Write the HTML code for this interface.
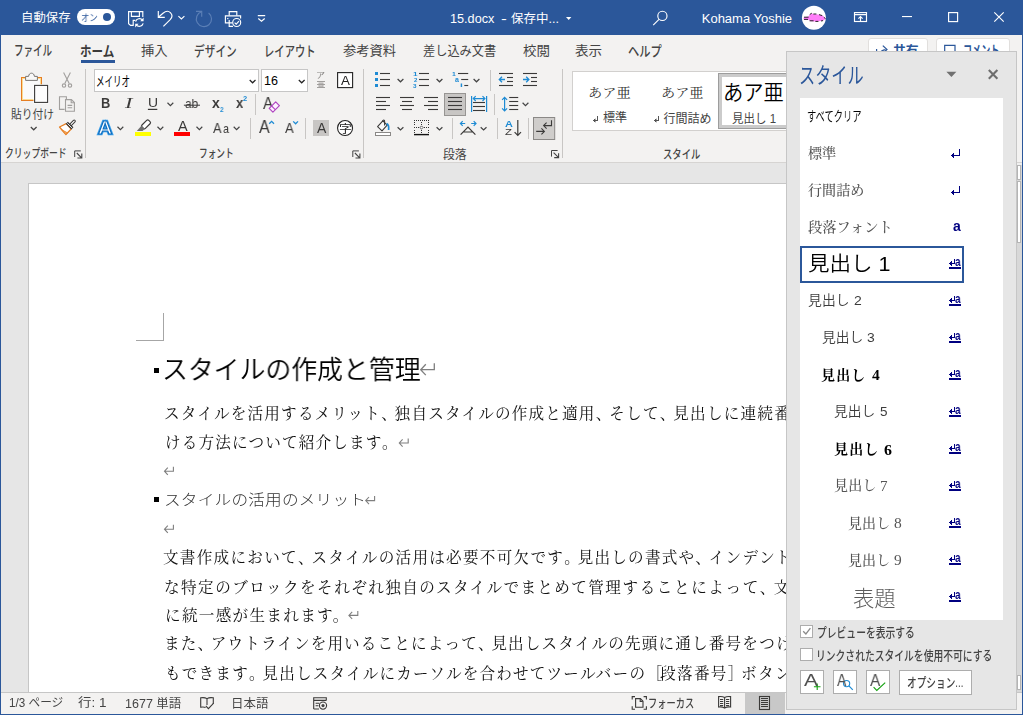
<!DOCTYPE html>
<html lang="ja">
<head>
<meta charset="utf-8">
<title>15.docx - Word</title>
<style>
html,body{margin:0;padding:0}
body{width:1023px;height:715px;position:relative;overflow:hidden;background:#e6e6e6;font-family:'Liberation Sans','Noto Sans CJK JP',sans-serif;}
#app{position:absolute;left:0;top:0;width:1023px;height:715px;overflow:hidden}
#app div,#app svg,#app span,#app p,#app h1,#app h2{position:absolute;margin:0;padding:0;box-sizing:border-box}
#app svg{overflow:visible}
#app .t{white-space:nowrap;line-height:1;transform-origin:0 0;font-weight:400}
#app .sec{position:absolute;left:0;top:0;width:0;height:0;margin:0;padding:0;display:block}
</style>
</head>
<body>
<div id="app">
<main id="document" class="sec" aria-label="文書">
<div style="left:0px;top:163px;width:1023px;height:529px;background:#e6e6e6;"></div>
<div style="left:28px;top:183px;width:800px;height:520px;background:#ffffff;border:1px solid #c6c6c6;"></div>
<div style="left:136px;top:340px;width:28px;height:1px;background:#a6a6a6;"></div>
<div style="left:163px;top:313px;width:1px;height:28px;background:#a6a6a6;"></div>
<div style="left:154px;top:368px;width:5px;height:5px;background:#000;"></div>
<h1 class="t" style="font-family:'Liberation Sans','Noto Sans CJK JP',sans-serif;font-size:26.2px;font-weight:350;will-change:transform;transform:scaleX(0.9876);color:#000;left:161.71px;top:357px;">スタイルの作成と管理</h1>
<p class="t" style="font-family:'Liberation Serif','Noto Serif CJK SC',serif;font-size:15.6px;will-change:transform;color:#111;left:164.30px;top:406px;"><span style="position:static;letter-spacing:1.18px">スタイルを活用するメリット</span><span style="position:static;letter-spacing:-2.12px">、</span><span style="position:static;letter-spacing:1.18px">独自スタイルの作成と</span><span style="position:static;letter-spacing:1.23px">適用</span><span style="position:static;letter-spacing:-2.07px">、</span><span style="position:static;letter-spacing:1.23px">そして</span><span style="position:static;letter-spacing:-2.07px">、</span><span style="position:static;letter-spacing:1.23px">見出しに連続番</span></p>
<p class="t" style="font-family:'Liberation Serif','Noto Serif CJK SC',serif;font-size:15.6px;will-change:transform;color:#111;left:164.60px;top:435px;"><span style="position:static;letter-spacing:1.16px">ける方法について紹介しま</span><span style="position:static;letter-spacing:0.77px">す</span><span style="position:static;letter-spacing:-2.53px">。</span></p>
<div style="left:154px;top:497px;width:5px;height:5px;background:#000;"></div>
<h2 class="t" style="font-family:'Liberation Sans','Noto Sans CJK JP',sans-serif;font-size:14.6px;font-weight:300;will-change:transform;transform:scaleX(1.14);color:#333;left:163.75px;top:493px;"><span style="position:static;letter-spacing:0.19px">スタイルの活用の</span><span style="position:static;letter-spacing:0.12px">メリット</span></h2>
<p class="t" style="font-family:'Liberation Serif','Noto Serif CJK SC',serif;font-size:15.6px;will-change:transform;color:#111;left:163.36px;top:550px;"><span style="position:static;letter-spacing:1.27px">文書作成において</span><span style="position:static;letter-spacing:-2.03px">、</span><span style="position:static;letter-spacing:1.27px">スタイルの</span><span style="position:static;letter-spacing:1.27px">活用は必要不可欠です</span><span style="position:static;letter-spacing:-2.03px">。</span><span style="position:static;letter-spacing:1.20px">見出しの書式や</span><span style="position:static;letter-spacing:-2.10px">、</span><span style="position:static;letter-spacing:1.20px">インデ</span><span style="position:static;letter-spacing:0.55px">ント</span></p>
<p class="t" style="font-family:'Liberation Serif','Noto Serif CJK SC',serif;font-size:15.6px;will-change:transform;color:#111;left:164.27px;top:580px;"><span style="position:static;letter-spacing:1.45px">な特定のブロックをそれぞれ</span><span style="position:static;letter-spacing:1.34px">独自のスタイルでまとめて</span><span style="position:static;letter-spacing:1.57px">管理することによって</span><span style="position:static;letter-spacing:-1.73px">、</span><span style="position:static;letter-spacing:1.57px">文</span></p>
<p class="t" style="font-family:'Liberation Serif','Noto Serif CJK SC',serif;font-size:15.6px;will-change:transform;color:#111;left:164.57px;top:608px;"><span style="position:static;letter-spacing:1.30px">に統一感が生まれま</span><span style="position:static;letter-spacing:0.17px">す</span><span style="position:static;letter-spacing:-3.13px">。</span></p>
<p class="t" style="font-family:'Liberation Serif','Noto Serif CJK SC',serif;font-size:15.6px;will-change:transform;color:#111;left:163.82px;top:636px;"><span style="position:static;letter-spacing:1.12px">また</span><span style="position:static;letter-spacing:-2.18px">、</span><span style="position:static;letter-spacing:1.12px">アウトラインを用いる</span><span style="position:static;letter-spacing:1.14px">ことによって</span><span style="position:static;letter-spacing:-2.16px">、</span><span style="position:static;letter-spacing:1.14px">見出しスタイルの</span><span style="position:static;letter-spacing:1.18px">先頭に通し番号を</span><span style="position:static;letter-spacing:1.52px">つけ</span></p>
<p class="t" style="font-family:'Liberation Serif','Noto Serif CJK SC',serif;font-size:15.6px;will-change:transform;color:#111;left:164.80px;top:666px;"><span style="position:static;letter-spacing:1.19px">もできます</span><span style="position:static;letter-spacing:-2.11px">。</span><span style="position:static;letter-spacing:1.19px">見出しスタイル</span><span style="position:static;letter-spacing:1.15px">にカーソルを合わせてツー</span><span style="position:static;letter-spacing:1.32px">ルバーの</span><span style="position:static;letter-spacing:-1.98px">［</span><span style="position:static;letter-spacing:1.32px">段落番</span><span style="position:static;letter-spacing:1.16px">号</span><span style="position:static;letter-spacing:-2.14px">］</span><span style="position:static;letter-spacing:1.37px">ボタン</span></p>
<svg style="left:0px;top:0px;" width="1023" height="715" viewBox="0 0 1023 715"><path d="M434.30 363.30V369.70H420.80M425.80 364.30L420.70 369.70L425.80 375.10" stroke="#7f7f7f" stroke-width="1.3" fill="none"/><path d="M408.20 438.50V443.00H399.40M402.60 439.40L399.30 443.00L402.60 446.60" stroke="#7f7f7f" stroke-width="1.1" fill="none"/><path d="M173.40 466.70V471.20H164.60M167.80 467.60L164.50 471.20L167.80 474.80" stroke="#7f7f7f" stroke-width="1.1" fill="none"/><path d="M374.60 496.10V500.60H365.80M369.00 497.00L365.70 500.60L369.00 504.20" stroke="#7f7f7f" stroke-width="1.1" fill="none"/><path d="M173.40 524.70V529.20H164.60M167.80 525.60L164.50 529.20L167.80 532.80" stroke="#7f7f7f" stroke-width="1.1" fill="none"/><path d="M357.80 610.90V615.40H349.00M352.20 611.80L348.90 615.40L352.20 619.00" stroke="#7f7f7f" stroke-width="1.1" fill="none"/></svg>
</main>
<nav id="ribbon" class="sec" aria-label="リボン">
<div style="left:0px;top:35px;width:1023px;height:127px;background:#f3f2f1;"></div>
<span class="t" style="font-family:'Liberation Sans','Noto Sans CJK JP',sans-serif;font-size:14px;font-weight:500;transform:scaleX(0.6814);color:#444;left:14.17px;top:43px;">ファイル</span>
<span class="t" style="font-family:'Liberation Sans','Noto Sans CJK JP',sans-serif;font-size:14px;font-weight:700;transform:scaleX(0.8255);color:#3b3a39;left:80.42px;top:44px;">ホーム</span>
<div style="left:81px;top:60px;width:34px;height:3px;background:#2b579a;"></div>
<span class="t" style="font-family:'Liberation Sans','Noto Sans CJK JP',sans-serif;font-size:13px;transform:scaleX(1.0270);color:#444;left:140.62px;top:44px;">挿入</span>
<span class="t" style="font-family:'Liberation Sans','Noto Sans CJK JP',sans-serif;font-size:14px;font-weight:500;transform:scaleX(0.7636);color:#444;left:194.21px;top:44px;">デザイン</span>
<span class="t" style="font-family:'Liberation Sans','Noto Sans CJK JP',sans-serif;font-size:14px;font-weight:500;transform:scaleX(0.7368);color:#444;left:264.02px;top:44px;">レイアウト</span>
<span class="t" style="font-family:'Liberation Sans','Noto Sans CJK JP',sans-serif;font-size:13px;transform:scaleX(1.0223);color:#444;left:343.47px;top:44px;">参考資料</span>
<span class="t" style="font-family:'Liberation Sans','Noto Sans CJK JP',sans-serif;font-size:13px;transform:scaleX(0.9382);color:#444;left:422.74px;top:44px;">差し込み文書</span>
<span class="t" style="font-family:'Liberation Sans','Noto Sans CJK JP',sans-serif;font-size:13px;transform:scaleX(1.0381);color:#444;left:522.76px;top:44px;">校閲</span>
<span class="t" style="font-family:'Liberation Sans','Noto Sans CJK JP',sans-serif;font-size:13px;transform:scaleX(1.0416);color:#444;left:575.41px;top:44px;">表示</span>
<span class="t" style="font-family:'Liberation Sans','Noto Sans CJK JP',sans-serif;font-size:14px;font-weight:500;transform:scaleX(0.8033);color:#444;left:628.42px;top:44px;">ヘルプ</span>
<div style="left:868px;top:38px;width:60px;height:27px;background:#fff;border:1px solid #e1dfdd;border-radius:3px;"></div>
<div style="left:936px;top:38px;width:74px;height:27px;background:#fff;border:1px solid #e1dfdd;border-radius:3px;"></div>
<span class="t" style="font-family:'Liberation Sans','Noto Sans CJK JP',sans-serif;font-size:13px;font-weight:700;transform:scaleX(0.9860);color:#2b579a;left:892.65px;top:44px;">共有</span>
<span class="t" style="font-family:'Liberation Sans','Noto Sans CJK JP',sans-serif;font-size:13.5px;font-weight:700;transform:scaleX(0.6720);color:#2b579a;left:963.18px;top:44px;">コメント</span>
<svg style="left:0px;top:0px;" width="1023" height="70" viewBox="0 0 1023 70"><path d="M876.6 49V57M879.4 54.4C880.4 51.4 882.6 49.8 885.6 49.6M882.8 45.6L887 49.6L882.8 53.6" stroke="#2b579a" fill="none" stroke-width="1.2"/><path d="M944.7 45.4H955V55H944.7Z" stroke="#2b579a" fill="none" stroke-width="1.2"/></svg>
<div style="left:0px;top:162px;width:1023px;height:1px;background:#d6d4d2;"></div>
<div style="left:85px;top:69px;width:1px;height:89px;background:#c8c6c4;"></div>
<div style="left:363px;top:69px;width:1px;height:89px;background:#c8c6c4;"></div>
<div style="left:562px;top:69px;width:1px;height:89px;background:#c8c6c4;"></div>
<span class="t" style="font-family:'Liberation Sans','Noto Sans CJK JP',sans-serif;font-size:12px;transform:scaleX(0.8969);color:#444;left:10.61px;top:109px;">貼り付け</span>
<span class="t" style="font-family:'Liberation Sans','Noto Sans CJK JP',sans-serif;font-size:12px;font-weight:500;transform:scaleX(0.7336);color:#444;left:5.10px;top:148px;">クリップボード</span>
<span class="t" style="font-family:'Liberation Sans','Noto Sans CJK JP',sans-serif;font-size:12px;font-weight:500;transform:scaleX(0.7230);color:#444;left:198.96px;top:148px;">フォント</span>
<span class="t" style="font-family:'Liberation Sans','Noto Sans CJK JP',sans-serif;font-size:12px;transform:scaleX(0.9870);color:#444;left:443.14px;top:149px;">段落</span>
<span class="t" style="font-family:'Liberation Sans','Noto Sans CJK JP',sans-serif;font-size:12px;font-weight:500;transform:scaleX(0.7763);color:#444;left:663.14px;top:149px;">スタイル</span>
<div style="left:94px;top:69px;width:165px;height:23px;background:#fff;border:1px solid #c6c6c6;"></div>
<span class="t" style="font-family:'Liberation Sans','Noto Sans CJK JP',sans-serif;font-size:13.5px;transform:scaleX(0.6318);color:#000;left:96.27px;top:75px;">メイリオ</span>
<div style="left:261px;top:69px;width:47px;height:23px;background:#fff;border:1px solid #c6c6c6;"></div>
<span class="t" style="font-family:'Liberation Sans','Noto Sans CJK JP',sans-serif;font-size:12px;transform:scaleX(1.0470);color:#000;left:264.10px;top:75px;">16</span>
<div style="left:572px;top:71px;width:250px;height:60px;background:#fff;border:1px solid #d2d0ce;"></div>
<span class="t" style="font-family:'Liberation Serif','Noto Serif CJK SC',serif;font-size:12.6px;transform:scaleX(1.1299);color:#333;left:588.45px;top:87px;">あア亜</span>
<span class="t" style="font-family:'Liberation Sans','Noto Sans CJK JP',sans-serif;font-size:12.5px;transform:scaleX(0.9652);color:#444;left:602.89px;top:112px;">標準</span>
<span class="t" style="font-family:'Liberation Serif','Noto Serif CJK SC',serif;font-size:12.6px;transform:scaleX(1.1243);color:#333;left:661.05px;top:87px;">あア亜</span>
<span class="t" style="font-family:'Liberation Sans','Noto Sans CJK JP',sans-serif;font-size:12px;color:#444;left:663.55px;top:113px;">行間詰め</span>
<div style="left:718px;top:73px;width:100px;height:56px;background:#fff;border:4px solid #cbcbcb;"></div>
<div style="left:718px;top:73px;width:100px;height:56px;border:1px solid #9d9d9d;"></div>
<span class="t" style="font-family:'Liberation Sans','Noto Sans CJK JP',sans-serif;font-size:21.33px;font-weight:350;transform:scaleX(0.9494);color:#000;left:723.01px;top:83px;">あア亜</span>
<span class="t" style="font-family:'Liberation Sans','Noto Sans CJK JP',sans-serif;font-size:12px;transform:scaleX(0.9572);color:#444;left:731.88px;top:113px;">見出し 1</span>
<svg style="left:0px;top:0px;" width="1023" height="165" viewBox="0 0 1023 165"><rect x="21.5" y="77.5" width="20" height="23" fill="#fafafa" stroke="#e67e22" stroke-width="1"/><rect x="22.5" y="78.5" width="18" height="21" fill="none" stroke="#fbdc94" stroke-width="1"/><path d="M25.6 80.4V76.4H28.6C28.8 74.2 30 73.2 31.5 73.2C33 73.2 34.2 74.2 34.4 76.4H37.4V80.4Z" fill="#f8f8f8" stroke="#797775" stroke-width="1"/><rect x="33.5" y="84.3" width="15.2" height="19.2" fill="#fff"/><rect x="34.6" y="85.4" width="13" height="17" fill="#fdfdfd" stroke="#3b3a39" stroke-width="1.1"/><path d="M30.8 127L33.7 129.8L36.6 127" stroke="#444" fill="none" stroke-width="1.2"/><path stroke="#a19f9d" fill="none" stroke-width="1.1" d="M63.6 72.6L69.2 83.6M70.4 72.6L64.8 83.6"/><circle cx="64" cy="85.6" r="1.7" stroke="#a19f9d" fill="none" stroke-width="1.1"/><circle cx="70" cy="85.6" r="1.7" stroke="#a19f9d" fill="none" stroke-width="1.1"/><path stroke="#a19f9d" fill="none" stroke-width="1.1" d="M64.6 109.4H59.5V96.8H66.4V99"/><path stroke="#a19f9d" fill="none" stroke-width="1.1" d="M65.5 99.6H71.4L74.4 102.6V111.2H65.5Z" fill="#f3f2f1"/><path stroke="#a19f9d" fill="none" stroke-width="1.1" d="M71.2 99.8V102.8H74.2M67.6 105.4H72.2M67.6 107.8H72.2"/><path d="M66.2 123.6L59.5 127L65.9 134.5L71.2 129Z" fill="#fff" stroke="#e67e22" stroke-width="1.2" stroke-linejoin="round"/><path d="M61.4 129.6L67.4 132.8L65.9 134.4Z" fill="#f6b26b" stroke="#e67e22" stroke-width="0.8" stroke-linejoin="round"/><path d="M70.8 124.6L74.2 121.2" stroke="#3b3a39" stroke-width="3.2" stroke-linecap="round" fill="none"/><path d="M70.8 124.6L74.2 121.2" stroke="#fff" stroke-width="1.2" stroke-linecap="round" fill="none"/><path d="M66.8 122.8L72.4 128.4" stroke="#3b3a39" stroke-width="3" fill="none"/><path d="M67.3 123.3L71.9 127.9" stroke="#fff" stroke-width="0.9" fill="none"/><path d="M74.7 157.0V150.9H80.8" stroke="#444" fill="none" stroke-width="1"/><path d="M76.8 153.0L81.60000000000001 157.8M81.8 153.6V158.0H77.4" stroke="#444" fill="none" stroke-width="1.1"/></svg>
<svg style="left:0px;top:0px;" width="1023" height="165" viewBox="0 0 1023 165"><path d="M249.7 80.0L252.6 82.8L255.5 80.0" stroke="#222" fill="none" stroke-width="1.2"/><path d="M298.8 80.0L301.7 82.8L304.6 80.0" stroke="#222" fill="none" stroke-width="1.2"/><rect x="317" y="81.0" width="8" height="1" fill="#a19f9d"/><rect x="317" y="84.0" width="8" height="1" fill="#a19f9d"/><rect x="317" y="87.0" width="8" height="1" fill="#a19f9d"/><rect x="319" y="83" width="4" height="4" fill="none" stroke="#a19f9d" stroke-width="0.8"/><rect x="337.6" y="72.6" width="15" height="15" fill="#fff" stroke="#222" stroke-width="1.1"/><path d="M167.5 102.8L170.4 105.6L173.3 102.8" stroke="#444" fill="none" stroke-width="1.2"/><rect x="147.9" y="108.8" width="9.4" height="1.2" fill="#3b3a39"/><rect x="183.9" y="104.7" width="16.1" height="1" fill="#3b3a39"/><rect x="255" y="94" width="1" height="21" fill="#c8c6c4"/><path d="M117.5 126.8L120.4 129.6L123.3 126.8" stroke="#444" fill="none" stroke-width="1.2"/><path d="M157.5 126.8L160.4 129.6L163.3 126.8" stroke="#444" fill="none" stroke-width="1.2"/><path d="M196.5 126.8L199.4 129.6L202.3 126.8" stroke="#444" fill="none" stroke-width="1.2"/><path d="M233.7 126.8L236.6 129.6L239.5 126.8" stroke="#444" fill="none" stroke-width="1.2"/><g transform="rotate(-45 145.8 124.6)"><rect x="141.3" y="122.2" width="9.6" height="4.8" rx="1.5" fill="#fff" stroke="#3b3a39" stroke-width="1.15"/></g><path d="M141.6 125.6L144.8 128.8L142.6 131.1H136.8Z" fill="#6e6e6e"/><rect x="135" y="132" width="16" height="4" fill="#ffff00"/><rect x="174" y="132" width="16" height="4" fill="#ff0000"/><rect x="250" y="118" width="1" height="21" fill="#c8c6c4"/><rect x="305" y="118" width="1" height="21" fill="#c8c6c4"/><path d="M269.2 123.8L271.6 121.4L274 123.8" stroke="#1e8bd4" fill="none" stroke-width="1.3"/><path d="M293.2 121.4L295.6 123.8L298 121.4" stroke="#1e8bd4" fill="none" stroke-width="1.3"/><rect x="313" y="120" width="16" height="16" fill="#c8c6c4"/><circle cx="345.05" cy="128.05" r="7.5" fill="#fff" stroke="#222" stroke-width="1.1"/><path d="M352.8 157.0V150.9H358.90000000000003" stroke="#444" fill="none" stroke-width="1"/><path d="M354.90000000000003 153.0L359.7 157.8M359.90000000000003 153.6V158.0H355.5" stroke="#444" fill="none" stroke-width="1.1"/></svg>
<span class="t" style="font-family:'Liberation Sans','Noto Sans CJK JP',sans-serif;font-size:8px;will-change:transform;transform:scaleX(1.1335);color:#8a8886;left:316.16px;top:72px;">ア</span>
<span class="t" style="font-family:'Liberation Sans','Noto Sans CJK JP',sans-serif;font-size:4px;will-change:transform;transform:scaleX(1.0721);color:#a19f9d;left:319.01px;top:84px;">亜</span>
<span class="t" style="font-family:'Liberation Sans',sans-serif;font-size:13px;will-change:transform;transform:scaleX(1.0296);color:#222;left:340.75px;top:74px;">A</span>
<span class="t" style="font-family:'Liberation Sans',sans-serif;font-size:14.5px;font-weight:700;will-change:transform;transform:scaleX(0.8829);color:#3b3a39;left:100.60px;top:96px;">B</span>
<span class="t" style="font-family:'Liberation Serif',serif;font-size:14px;font-style:italic;will-change:transform;transform:scaleX(1.5990);color:#3b3a39;left:125.26px;top:97px;">I</span>
<span class="t" style="font-family:'Liberation Sans',sans-serif;font-size:12.5px;will-change:transform;transform:scaleX(1.1143);color:#3b3a39;left:147.70px;top:97px;">U</span>
<span class="t" style="font-family:'Liberation Sans',sans-serif;font-size:13px;will-change:transform;transform:scaleX(0.9073);color:#3b3a39;left:185.35px;top:97px;">ab</span>
<span class="t" style="font-family:'Liberation Sans',sans-serif;font-size:14px;font-weight:700;will-change:transform;transform:scaleX(0.9755);color:#3b3a39;left:212.36px;top:96px;">x</span>
<span class="t" style="font-family:'Liberation Sans',sans-serif;font-size:7.5px;font-weight:700;will-change:transform;transform:scaleX(0.8587);color:#1e8bd4;left:219.70px;top:106px;">2</span>
<span class="t" style="font-family:'Liberation Sans',sans-serif;font-size:14px;font-weight:700;will-change:transform;transform:scaleX(0.9331);color:#3b3a39;left:236.36px;top:96px;">x</span>
<span class="t" style="font-family:'Liberation Sans',sans-serif;font-size:7.5px;font-weight:700;will-change:transform;color:#1e8bd4;left:243.49px;top:95px;">2</span>
<span class="t" style="font-family:'Liberation Sans',sans-serif;font-size:17px;will-change:transform;transform:scaleX(0.8842);color:#3b3a39;left:263.16px;top:95px;">A</span>
<span class="t" style="font-family:'Liberation Sans',sans-serif;font-size:18px;font-weight:700;will-change:transform;transform:scaleX(1.0989);color:#fff;left:97.97px;top:119px;-webkit-text-stroke:2.6px #41a5ee;">A</span>
<span class="t" style="font-family:'Liberation Sans',sans-serif;font-size:18px;font-weight:700;will-change:transform;transform:scaleX(1.0989);color:#fff;left:97.97px;top:119px;-webkit-text-stroke:1.1px #0f6cbd;">A</span>
<span class="t" style="font-family:'Liberation Sans',sans-serif;font-size:14.5px;will-change:transform;transform:scaleX(0.9627);color:#3b3a39;left:177.65px;top:119px;">A</span>
<span class="t" style="font-family:'Liberation Sans',sans-serif;font-size:14px;will-change:transform;transform:scaleX(0.9141);color:#3b3a39;left:213.26px;top:121px;">A</span>
<span class="t" style="font-family:'Liberation Sans',sans-serif;font-size:13px;font-weight:500;will-change:transform;transform:scaleX(0.8188);color:#3b3a39;left:223.27px;top:122px;">a</span>
<span class="t" style="font-family:'Liberation Sans',sans-serif;font-size:17.5px;will-change:transform;transform:scaleX(0.9223);color:#3b3a39;left:259.27px;top:119px;">A</span>
<span class="t" style="font-family:'Liberation Sans',sans-serif;font-size:14px;will-change:transform;transform:scaleX(0.9366);color:#3b3a39;left:284.86px;top:121px;">A</span>
<span class="t" style="font-family:'Liberation Sans',sans-serif;font-size:14px;will-change:transform;transform:scaleX(0.9705);color:#3b3a39;left:316.66px;top:121px;">A</span>
<span class="t" style="font-family:'Liberation Sans','Noto Sans CJK JP',sans-serif;font-size:11.5px;will-change:transform;transform:scaleX(1.1109);color:#222;left:338.60px;top:124px;">字</span>
<svg style="left:0px;top:0px;" width="1023" height="165" viewBox="0 0 1023 165"><path d="M279.4 105.6L275.7 101.9L269.2 108.4L272.9 112.1Z" fill="#fdf3ff" stroke="#b146c2" stroke-width="1.2" stroke-linejoin="round"/><path d="M275.3 109.7L271.6 106.0" stroke="#b146c2" stroke-width="1.1" fill="none"/></svg>
<svg style="left:0px;top:0px;" width="1023" height="165" viewBox="0 0 1023 165"><rect x="375" y="72.0" width="3" height="3" fill="#1e8bd4"/><rect x="380" y="72.95" width="10.00" height="1.1" fill="#3b3a39"/><rect x="375" y="78.0" width="3" height="3" fill="#1e8bd4"/><rect x="380" y="78.95" width="10.00" height="1.1" fill="#3b3a39"/><rect x="375" y="84.0" width="3" height="3" fill="#1e8bd4"/><rect x="380" y="84.95" width="10.00" height="1.1" fill="#3b3a39"/><path d="M397.6 79.0L400.5 81.8L403.40000000000003 79.0" stroke="#444" fill="none" stroke-width="1.2"/><rect x="419" y="72.95" width="10.00" height="1.1" fill="#3b3a39"/><rect x="419" y="78.95" width="10.00" height="1.1" fill="#3b3a39"/><rect x="419" y="84.95" width="10.00" height="1.1" fill="#3b3a39"/><path d="M436.6 79.0L439.5 81.8L442.40000000000003 79.0" stroke="#444" fill="none" stroke-width="1.2"/><rect x="458" y="72.95" width="10.20" height="1.1" fill="#3b3a39"/><rect x="461.2" y="78.95" width="7.00" height="1.1" fill="#3b3a39"/><rect x="464.3" y="84.95" width="3.90" height="1.1" fill="#3b3a39"/><path d="M473.6 79.0L476.5 81.8L479.40000000000003 79.0" stroke="#444" fill="none" stroke-width="1.2"/><rect x="490" y="70" width="1" height="21" fill="#c8c6c4"/><rect x="499" y="72.95" width="14.00" height="1.1" fill="#3b3a39"/><rect x="499" y="84.95" width="14.00" height="1.1" fill="#3b3a39"/><rect x="507" y="76.95" width="6.00" height="1.1" fill="#3b3a39"/><rect x="507" y="80.95" width="6.00" height="1.1" fill="#3b3a39"/><path d="M505.00 79.50L499.30 79.50M502.00 76.80L499.30 79.50L502.00 82.20" stroke="#1e8bd4" fill="none" stroke-width="1.3"/><rect x="523" y="72.95" width="14.00" height="1.1" fill="#3b3a39"/><rect x="523" y="84.95" width="14.00" height="1.1" fill="#3b3a39"/><rect x="531" y="76.95" width="6.00" height="1.1" fill="#3b3a39"/><rect x="531" y="80.95" width="6.00" height="1.1" fill="#3b3a39"/><path d="M523.00 79.50L528.90 79.50M526.20 82.20L528.90 79.50L526.20 76.80" stroke="#1e8bd4" fill="none" stroke-width="1.3"/><rect x="376" y="96.95" width="14.00" height="1.1" fill="#3b3a39"/><rect x="400" y="96.95" width="14.00" height="1.1" fill="#3b3a39"/><rect x="424" y="96.95" width="14.00" height="1.1" fill="#3b3a39"/><rect x="376" y="100.95" width="10.00" height="1.1" fill="#3b3a39"/><rect x="402" y="100.95" width="10.00" height="1.1" fill="#3b3a39"/><rect x="428" y="100.95" width="10.00" height="1.1" fill="#3b3a39"/><rect x="376" y="104.95" width="14.00" height="1.1" fill="#3b3a39"/><rect x="400" y="104.95" width="14.00" height="1.1" fill="#3b3a39"/><rect x="424" y="104.95" width="14.00" height="1.1" fill="#3b3a39"/><rect x="376" y="108.95" width="10.00" height="1.1" fill="#3b3a39"/><rect x="402" y="108.95" width="10.00" height="1.1" fill="#3b3a39"/><rect x="428" y="108.95" width="10.00" height="1.1" fill="#3b3a39"/><rect x="444.5" y="93.5" width="21" height="22" fill="#c8c6c4" stroke="#979593" stroke-width="1"/><rect x="448" y="96.95" width="14.00" height="1.1" fill="#3b3a39"/><rect x="448" y="100.95" width="14.00" height="1.1" fill="#3b3a39"/><rect x="448" y="104.95" width="14.00" height="1.1" fill="#3b3a39"/><rect x="448" y="108.95" width="14.00" height="1.1" fill="#3b3a39"/><rect x="471" y="96" width="1.2" height="16" fill="#1e8bd4"/><rect x="486" y="96" width="1.2" height="16" fill="#1e8bd4"/><path d="M479.00 98.60L473.30 98.60M475.70 96.20L473.30 98.60L475.70 101.00" stroke="#1e8bd4" fill="none" stroke-width="1.2"/><path d="M479.00 98.60L484.90 98.60M482.50 101.00L484.90 98.60L482.50 96.20" stroke="#1e8bd4" fill="none" stroke-width="1.2"/><rect x="473" y="101.95" width="12.00" height="1.1" fill="#3b3a39"/><rect x="473" y="105.95" width="12.00" height="1.1" fill="#3b3a39"/><rect x="473" y="109.95" width="12.00" height="1.1" fill="#3b3a39"/><rect x="494" y="94" width="1" height="21" fill="#c8c6c4"/><path d="M504.60 104.00L504.60 97.30M507.10 99.80L504.60 97.30L502.10 99.80" stroke="#1e8bd4" fill="none" stroke-width="1.2"/><path d="M504.60 104.00L504.60 110.90M502.10 108.40L504.60 110.90L507.10 108.40" stroke="#1e8bd4" fill="none" stroke-width="1.2"/><rect x="509.2" y="96.95" width="9.00" height="1.1" fill="#3b3a39"/><rect x="509.2" y="100.95" width="9.00" height="1.1" fill="#3b3a39"/><rect x="509.2" y="104.95" width="9.00" height="1.1" fill="#3b3a39"/><rect x="509.2" y="108.95" width="9.00" height="1.1" fill="#3b3a39"/><path d="M522.6 102.8L525.5 105.6L528.4 102.8" stroke="#444" fill="none" stroke-width="1.2"/><path d="M382.8 120.8L377.6 126.6L382 130.8L387.2 125.2Z" fill="#fafafa" stroke="#3b3a39" stroke-width="1.1" stroke-linejoin="round"/><path d="M382.6 121.2C383 119.8 384.6 119.6 384.6 121.2V125.6" fill="none" stroke="#3b3a39" stroke-width="1.1"/><path d="M386.6 123.6C388.4 124.4 389 126.8 388.6 130" fill="none" stroke="#1e8bd4" stroke-width="1.7"/><rect x="375.5" y="132.5" width="15" height="3" fill="#fff" stroke="#8a8886" stroke-width="1"/><path d="M397.6 127.2L400.5 130.0L403.40000000000003 127.2" stroke="#444" fill="none" stroke-width="1.2"/><rect x="414" y="120" width="1" height="1" fill="#333"/><rect x="414" y="122" width="1" height="1" fill="#333"/><rect x="414" y="124" width="1" height="1" fill="#333"/><rect x="414" y="127" width="1" height="1" fill="#333"/><rect x="414" y="130" width="1" height="1" fill="#333"/><rect x="414" y="132" width="1" height="1" fill="#333"/><rect x="416" y="120" width="1" height="1" fill="#333"/><rect x="416" y="127" width="1" height="1" fill="#333"/><rect x="418" y="120" width="1" height="1" fill="#333"/><rect x="418" y="127" width="1" height="1" fill="#333"/><rect x="420" y="120" width="1" height="1" fill="#333"/><rect x="421" y="122" width="1" height="1" fill="#333"/><rect x="421" y="124" width="1" height="1" fill="#333"/><rect x="421" y="130" width="1" height="1" fill="#333"/><rect x="421" y="132" width="1" height="1" fill="#333"/><rect x="422" y="120" width="1" height="1" fill="#333"/><rect x="424" y="120" width="1" height="1" fill="#333"/><rect x="424" y="127" width="1" height="1" fill="#333"/><rect x="426" y="120" width="1" height="1" fill="#333"/><rect x="426" y="127" width="1" height="1" fill="#333"/><rect x="428" y="120" width="1" height="1" fill="#333"/><rect x="428" y="122" width="1" height="1" fill="#333"/><rect x="428" y="124" width="1" height="1" fill="#333"/><rect x="428" y="127" width="1" height="1" fill="#333"/><rect x="428" y="130" width="1" height="1" fill="#333"/><rect x="428" y="132" width="1" height="1" fill="#333"/><path d="M421.5 125.9L423.1 127.5L421.5 129.1L419.9 127.5Z" fill="#fff" stroke="#333" stroke-width="0.8"/><rect x="414" y="133.90" width="15.00" height="1.4" fill="#111"/><path d="M436.6 127.2L439.5 130.0L442.40000000000003 127.2" stroke="#444" fill="none" stroke-width="1.2"/><rect x="452" y="118" width="1" height="21" fill="#c8c6c4"/><path d="M465.20 123.50L460.40 123.50M462.70 121.20L460.40 123.50L462.70 125.80" stroke="#1e8bd4" fill="none" stroke-width="1.2"/><path d="M471.20 123.50L476.00 123.50M473.70 125.80L476.00 123.50L473.70 121.20" stroke="#1e8bd4" fill="none" stroke-width="1.2"/><path d="M460.6 134.6L468 127L475.4 134.6M463.2 132H472.8" fill="none" stroke="#3b3a39" stroke-width="1.2"/><path d="M480.7 127.2L483.59999999999997 130.0L486.5 127.2" stroke="#444" fill="none" stroke-width="1.2"/><rect x="497" y="118" width="1" height="21" fill="#c8c6c4"/><path d="M517.80 120.00L517.80 135.40M514.60 132.20L517.80 135.40L521.00 132.20" stroke="#3b3a39" fill="none" stroke-width="1.2"/><rect x="528" y="118" width="1" height="21" fill="#c8c6c4"/><rect x="533.5" y="117.5" width="21.2" height="22" fill="#cfcdcb" stroke="#8a8886" stroke-width="1"/><path d="M551.5 120.2V125.6H543.8M546.6 122.6L543.6 125.6L546.6 128.6" fill="none" stroke="#3b3a39" stroke-width="1.1"/><path d="M536.2 131.4H544.2M541.4 128.4L544.4 131.4L541.4 134.4" fill="none" stroke="#3b3a39" stroke-width="1.1"/><path d="M551.5 156.6V150.5H557.6" stroke="#444" fill="none" stroke-width="1"/><path d="M553.6 152.6L558.4 157.4M558.6 153.2V157.6H554.2" stroke="#444" fill="none" stroke-width="1.1"/></svg>
<span class="t" style="font-family:'Liberation Sans',sans-serif;font-size:5px;font-weight:700;will-change:transform;transform:scaleX(1.6499);color:#1e8bd4;left:413.08px;top:72px;">1</span>
<span class="t" style="font-family:'Liberation Sans',sans-serif;font-size:5px;font-weight:700;will-change:transform;transform:scaleX(1.2071);color:#1e8bd4;left:413.64px;top:78px;">2</span>
<span class="t" style="font-family:'Liberation Sans',sans-serif;font-size:5px;font-weight:700;will-change:transform;transform:scaleX(1.2665);color:#1e8bd4;left:413.35px;top:84px;">3</span>
<span class="t" style="font-family:'Liberation Sans',sans-serif;font-size:5.5px;font-weight:700;will-change:transform;transform:scaleX(1.2589);color:#1e8bd4;left:452.22px;top:72px;">1</span>
<span class="t" style="font-family:'Liberation Sans',sans-serif;font-size:7px;font-weight:700;will-change:transform;transform:scaleX(0.9832);color:#1e8bd4;left:455.35px;top:76px;">a</span>
<span class="t" style="font-family:'Liberation Sans',sans-serif;font-size:6px;font-weight:700;will-change:transform;transform:scaleX(1.7057);color:#1e8bd4;left:460.02px;top:82px;">i</span>
<span class="t" style="font-family:'Liberation Sans',sans-serif;font-size:9.5px;font-weight:700;will-change:transform;transform:scaleX(1.1475);color:#1e8bd4;left:504.57px;top:119px;">A</span>
<span class="t" style="font-family:'Liberation Sans',sans-serif;font-size:9.5px;will-change:transform;transform:scaleX(1.1965);color:#3b3a39;left:504.69px;top:127px;">Z</span>
<svg style="left:0px;top:0px;" width="1023" height="165" viewBox="0 0 1023 165"><rect x="597" y="116" width="1" height="5" fill="#555"/><rect x="593" y="120" width="4" height="1" fill="#555"/><rect x="594" y="119" width="1" height="3" fill="#555"/><rect x="595" y="118.5" width="1" height="4" fill="#555" opacity="0.5"/><rect x="658" y="116" width="1" height="5" fill="#555"/><rect x="654" y="120" width="4" height="1" fill="#555"/><rect x="655" y="119" width="1" height="3" fill="#555"/><rect x="656" y="118.5" width="1" height="4" fill="#555" opacity="0.5"/></svg>
</nav>
<header id="titlebar" class="sec" aria-label="タイトル バー">
<div style="left:0px;top:0px;width:1023px;height:35px;background:#2b579a;"></div>
<span class="t" style="font-family:'Liberation Sans','Noto Sans CJK JP',sans-serif;font-size:12px;transform:scaleX(1.0345);color:#fff;left:20.86px;top:12px;">自動保存</span>
<div style="left:77px;top:9px;width:38px;height:16px;background:#fff;border-radius:8px;"></div>
<span class="t" style="font-family:'Liberation Sans','Noto Sans CJK JP',sans-serif;font-size:9.5px;will-change:transform;transform:scaleX(0.8770);color:#2b579a;left:81.14px;top:13px;">オン</span>
<div style="left:103px;top:13px;width:8px;height:8px;background:#2b579a;border-radius:4px;"></div>
<span class="t" style="font-family:'Liberation Sans','Noto Sans CJK JP',sans-serif;font-size:12.5px;transform:scaleX(1.0141);color:#fff;left:450.00px;top:13px;">15.docx</span>
<span class="t" style="font-family:'Liberation Sans','Noto Sans CJK JP',sans-serif;font-size:12.5px;transform:scaleX(1.4002);color:#fff;left:500.51px;top:13px;">-</span>
<span class="t" style="font-family:'Liberation Sans','Noto Sans CJK JP',sans-serif;font-size:12px;transform:scaleX(1.0428);color:#fff;left:510.92px;top:13px;">保存中...</span>
<svg style="left:565px;top:16px;" width="8" height="5" viewBox="0 0 8 5"><path d="M1 1h5.4L3.7 4z" fill="#fff"/></svg>
<span class="t" style="font-family:'Liberation Sans','Noto Sans CJK JP',sans-serif;font-size:13px;color:#fff;left:701.74px;top:12px;">Kohama Yoshie</span>
<svg style="left:0px;top:0px;" width="1023" height="36" viewBox="0 0 1023 36"><path stroke="#fff" fill="none" stroke-width="1.15" d="M142.8 17V11.6H128.6V23.8L130.6 25.4H133.6"/><path stroke="#fff" fill="none" stroke-width="1.15" d="M131.4 11.6V16.4H139.4V11.6"/><path stroke="#fff" fill="none" stroke-width="1.15" d="M133.2 25.4V20.4H135.4"/><path stroke="#fff" fill="none" stroke-width="1.15" d="M135.6 21.6A4 4 0 0 1 142.6 20.2M143.2 23.4A4 4 0 0 1 136.2 24.8"/><path fill="#fff" d="M143.6 17.6V21.2H140.2zM135.2 27.4V23.8H138.6z"/><path stroke="#fff" fill="none" stroke-width="1.15" stroke-width="1.3" d="M158.3 11V17.3H164.8"/><path stroke="#fff" fill="none" stroke-width="1.15" stroke-width="1.3" d="M158.6 17L163 13.2C165.6 11 168.6 10.9 170.4 12.6C172.4 14.6 172.3 17.4 170.2 19.6L163.4 26.4"/><path stroke="#fff" fill="none" stroke-width="1.15" stroke-width="1.3" d="M178.4 16.1L181.4 18.9L184.4 16.1"/><path stroke="#5b7fb6" fill="none" stroke-width="1.15" d="M196 11.4H201.7V16.8"/><path stroke="#5b7fb6" fill="none" stroke-width="1.15" d="M201.5 11.8A7.6 7.6 0 1 0 208.6 13"/><path stroke="#fff" fill="none" stroke-width="1.15" d="M229.2 15.6V11.6H236.8V15.6"/><path stroke="#fff" fill="none" stroke-width="1.15" d="M232.4 22.8H225.4V15.8H240.6V18.6"/><path stroke="#fff" fill="none" stroke-width="1.15" d="M229.2 20V26.3H233"/><rect x="227.2" y="18" width="1.2" height="1.2" fill="#fff"/><circle cx="236.7" cy="22.5" r="4" fill="#2b579a" stroke="#fff" stroke-width="1.15"/><path stroke="#fff" fill="none" stroke-width="1.15" stroke-width="1.3" d="M234.6 22.6L236.2 24.2L239 21.2"/><path stroke="#fff" fill="none" stroke-width="1.15" stroke-width="1.2" d="M257.8 15.6H265.2M258.3 18.5L261.5 21.3L264.7 18.5"/><circle cx="662.4" cy="15.9" r="4.6" stroke="#fff" fill="none" stroke-width="1.15" stroke-width="1.3"/><path stroke="#fff" fill="none" stroke-width="1.15" stroke-width="1.4" d="M659 19.4L653.2 25.2"/><circle cx="813.9" cy="17.8" r="12" fill="#fff"/><path d="M803.6 17.4L808.4 16.6L809.8 14.6L812 13.4L814.6 14.2L818.4 14.4L822.4 15.4L825.8 18.8L823 20.8L816.4 21.6L811 21.2L808.2 19.8L803.6 19.4Z" fill="#ff7ef8"/><path d="M804 17.2H808.6M809.8 14.4L811.8 13.2M813.4 14H816.4M819 14.6L822.2 15.6M823.8 17.2L825.6 18.8M804 19.4H808M809.6 20.8H813.6M815.4 21.4H818.4M821 21L823 20.6" stroke="#111" stroke-width="0.9" fill="none"/><rect x="854.5" y="12.6" width="12" height="8.9" stroke="#fff" fill="none" stroke-width="1.15"/><path stroke="#fff" fill="none" stroke-width="1.15" d="M854.5 14.6H866.5M860.5 21.4V16.6M858.4 18.6L860.5 16.5L862.6 18.6"/><rect x="902" y="16" width="10" height="1.1" fill="#fff"/><rect x="948.6" y="12.6" width="9" height="9" stroke="#fff" fill="none" stroke-width="1.15"/><path stroke="#fff" fill="none" stroke-width="1.15" stroke-width="1.1" d="M994.3 12.3L1003.7 21.7M1003.7 12.3L994.3 21.7"/></svg>
</header>
<footer id="statusbar" class="sec" aria-label="ステータス バー">
<div style="left:0px;top:692px;width:1023px;height:22px;background:#f3f2f1;border-top:1px solid #c6c6c6;"></div>
<span class="t" style="font-family:'Liberation Sans','Noto Sans CJK JP',sans-serif;font-size:12px;transform:scaleX(0.9724);color:#444;left:9.05px;top:697px;">1/3 ページ</span>
<span class="t" style="font-family:'Liberation Sans','Noto Sans CJK JP',sans-serif;font-size:12px;transform:scaleX(1.1205);color:#444;left:77.72px;top:697px;">行: 1</span>
<span class="t" style="font-family:'Liberation Sans','Noto Sans CJK JP',sans-serif;font-size:12px;transform:scaleX(1.0428);color:#444;left:124.70px;top:698px;">1677 単語</span>
<span class="t" style="font-family:'Liberation Sans','Noto Sans CJK JP',sans-serif;font-size:12px;transform:scaleX(1.0402);color:#444;left:230.86px;top:698px;">日本語</span>
<span class="t" style="font-family:'Liberation Sans','Noto Sans CJK JP',sans-serif;font-size:12px;font-weight:500;transform:scaleX(0.7692);color:#444;left:647.72px;top:698px;">フォーカス</span>
<div style="left:745px;top:693px;width:40px;height:21px;background:#c8c8c8;"></div>
<svg style="left:0px;top:0px;" width="1023" height="715" viewBox="0 0 1023 715"><path stroke="#3b3a39" fill="none" stroke-width="1.1" d="M207 698.6C205 697.4 203 697.4 200.7 697.8V707.2C203 706.8 204.6 707 205.6 707.6M207 698.6C209 697.4 211 697.4 213.3 697.8V704"/><path stroke="#3b3a39" fill="none" stroke-width="1.1" d="M207 698.6V705"/><path stroke="#3b3a39" fill="none" stroke-width="1.1" d="M205.8 705.8L208.4 708.6L213.4 703.4"/><path stroke="#3b3a39" fill="none" stroke-width="1.1" d="M313.7 709V697.7H326.3V700.4M313.7 700.4H326.3M319 709H313.7"/><path stroke="#3b3a39" fill="none" stroke-width="1.1" d="M315.6 703.2H319.4M315.6 705.8H318.4"/><circle cx="323" cy="705.6" r="3.6" stroke="#3b3a39" fill="none" stroke-width="1.1"/><circle cx="323" cy="705.6" r="1.6" fill="#444"/><path stroke="#3b3a39" fill="none" stroke-width="1.1" d="M632.2 699.6V696.6H635M643.6 696.6H646.4V699.6M646.4 706.2V709.2H643.6M635 709.2H632.2V706.2"/><path stroke="#3b3a39" fill="none" stroke-width="1.1" d="M635.6 698.6H640.4L643 701.2V707.2H635.6Z"/><path stroke="#3b3a39" fill="none" stroke-width="1.1" d="M640.2 698.8V701.4H642.8"/><path stroke="#3b3a39" fill="none" stroke-width="1.1" d="M724.6 697.4C722.8 696.4 720.8 696.3 718.6 696.6V707C720.8 706.7 722.8 706.9 724.6 708C726.4 706.9 728.4 706.7 730.6 707V696.6C728.4 696.3 726.4 696.4 724.6 697.4ZM724.6 697.4V708.6"/><rect x="720" y="699" width="3.2" height="1" fill="#3b3a39"/><rect x="726" y="699" width="3.2" height="1" fill="#3b3a39"/><rect x="720" y="701" width="3.2" height="1" fill="#3b3a39"/><rect x="726" y="701" width="3.2" height="1" fill="#3b3a39"/><rect x="720" y="703" width="3.2" height="1" fill="#3b3a39"/><rect x="726" y="703" width="3.2" height="1" fill="#3b3a39"/><rect x="720" y="705" width="3.2" height="1" fill="#3b3a39"/><rect x="726" y="705" width="3.2" height="1" fill="#3b3a39"/><rect x="759.5" y="696.5" width="10" height="13" stroke="#3b3a39" fill="none" stroke-width="1.1"/><rect x="761" y="698" width="7" height="1" fill="#3b3a39"/><rect x="761" y="700" width="7" height="1" fill="#3b3a39"/><rect x="761" y="702" width="7" height="1" fill="#3b3a39"/><rect x="761" y="704" width="7" height="1" fill="#3b3a39"/><rect x="761" y="706" width="7" height="1" fill="#3b3a39"/></svg>
<div style="left:1017px;top:163px;width:5px;height:529px;background:#d8d8d8;"></div>
<div style="left:1017px;top:163px;width:5px;height:2px;background:#efefef;"></div>
<div style="left:1017px;top:165px;width:4px;height:15px;background:#fff;border:1px solid #b4b4b4;"></div>
<div style="left:1017px;top:181px;width:4px;height:62px;background:#fff;border:1px solid #b4b4b4;"></div>
<div style="left:1017px;top:675px;width:4px;height:15px;background:#fff;border:1px solid #b4b4b4;"></div>
<div style="left:0px;top:35px;width:1px;height:680px;background:#2b579a;"></div>
<div style="left:1022px;top:35px;width:1px;height:680px;background:#2b579a;"></div>
<div style="left:0px;top:714px;width:1023px;height:1px;background:#2b579a;"></div>
</footer>
<aside id="styles-pane" class="sec" aria-label="スタイル">
<div style="left:786px;top:51px;width:231px;height:659px;background:#e6e6e6;border:1px solid #c6c6c6;"></div>
<span class="t" style="font-family:'Liberation Sans','Noto Sans CJK JP',sans-serif;font-size:22px;transform:scaleX(0.7340);color:#2b579a;left:799.08px;top:65px;">スタイル</span>
<div style="left:800px;top:98px;width:203px;height:522px;background:#fff;"></div>
<span class="t" style="font-family:'Liberation Sans','Noto Sans CJK JP',sans-serif;font-size:13.5px;will-change:transform;transform:scaleX(0.6858);color:#000;left:807.43px;top:110px;">すべてクリア</span>
<span class="t" style="font-family:'Liberation Serif','Noto Serif CJK SC',serif;font-size:13.33px;font-weight:500;will-change:transform;transform:scaleX(1.0567);color:#555;left:807.90px;top:147px;">標準</span>
<span class="t" style="font-family:'Liberation Serif','Noto Serif CJK SC',serif;font-size:13.33px;font-weight:500;will-change:transform;transform:scaleX(1.0558);color:#555;left:807.81px;top:184px;">行間詰め</span>
<span class="t" style="font-family:'Liberation Serif','Noto Serif CJK SC',serif;font-size:13.33px;font-weight:500;will-change:transform;transform:scaleX(1.0692);color:#555;left:807.87px;top:221px;">段落フォント</span>
<div style="left:800px;top:246px;width:164px;height:37px;border:2px solid #2b579a;"></div>
<span class="t" style="font-family:'Liberation Sans','Noto Sans CJK JP',sans-serif;font-size:20.5px;font-weight:350;will-change:transform;transform:scaleX(1.0502);color:#000;left:807.78px;top:254px;">見出し 1</span>
<span class="t" style="font-family:'Liberation Sans','Noto Sans CJK JP',sans-serif;font-size:13.8px;font-weight:350;will-change:transform;letter-spacing:0.092px;color:#3c3c3c;left:808.11px;top:294px;">見出し</span>
<span class="t" style="font-family:'Liberation Sans',sans-serif;font-size:13.5px;will-change:transform;transform:scaleX(1.0342);color:#3c3c3c;left:853.72px;top:294px;">2</span>
<span class="t" style="font-family:'Liberation Sans','Noto Sans CJK JP',sans-serif;font-size:13.8px;font-weight:350;will-change:transform;letter-spacing:-0.108px;color:#3c3c3c;left:821.51px;top:331px;">見出し</span>
<span class="t" style="font-family:'Liberation Sans',sans-serif;font-size:13.5px;will-change:transform;transform:scaleX(1.0293);color:#3c3c3c;left:867.03px;top:331px;">3</span>
<span class="t" style="font-family:'Liberation Serif','Noto Serif CJK SC',serif;font-size:14px;font-weight:700;will-change:transform;letter-spacing:1.157px;color:#000;left:821.30px;top:369px;">見出し</span>
<span class="t" style="font-family:'Liberation Serif',serif;font-size:15.5px;font-weight:700;will-change:transform;color:#000;left:871.65px;top:367px;">4</span>
<span class="t" style="font-family:'Liberation Sans','Noto Sans CJK JP',sans-serif;font-size:13.8px;font-weight:350;will-change:transform;letter-spacing:-0.008px;color:#3c3c3c;left:834.31px;top:405px;">見出し</span>
<span class="t" style="font-family:'Liberation Sans',sans-serif;font-size:13.5px;will-change:transform;color:#3c3c3c;left:879.90px;top:405px;">5</span>
<span class="t" style="font-family:'Liberation Serif','Noto Serif CJK SC',serif;font-size:14px;font-weight:700;will-change:transform;letter-spacing:1.157px;color:#000;left:834.30px;top:443px;">見出し</span>
<span class="t" style="font-family:'Liberation Serif',serif;font-size:15.5px;font-weight:700;will-change:transform;transform:scaleX(1.0252);color:#000;left:884.46px;top:442px;">6</span>
<span class="t" style="font-family:'Liberation Serif','Noto Serif CJK SC',serif;font-size:14px;font-weight:500;will-change:transform;letter-spacing:0.214px;color:#555;left:833.61px;top:479px;">見出し</span>
<span class="t" style="font-family:'Liberation Serif',serif;font-size:14.5px;will-change:transform;transform:scaleX(1.0407);color:#555;left:879.70px;top:479px;">7</span>
<span class="t" style="font-family:'Liberation Serif','Noto Serif CJK SC',serif;font-size:14px;font-weight:500;will-change:transform;letter-spacing:0.064px;color:#555;left:847.61px;top:517px;">見出し</span>
<span class="t" style="font-family:'Liberation Serif',serif;font-size:14.5px;will-change:transform;transform:scaleX(1.0677);color:#555;left:894.01px;top:516px;">8</span>
<span class="t" style="font-family:'Liberation Serif','Noto Serif CJK SC',serif;font-size:14px;font-weight:500;will-change:transform;letter-spacing:0.064px;color:#555;left:847.61px;top:554px;">見出し</span>
<span class="t" style="font-family:'Liberation Serif',serif;font-size:14.5px;will-change:transform;transform:scaleX(1.0638);color:#555;left:894.08px;top:553px;">9</span>
<span class="t" style="font-family:'Liberation Sans','Noto Sans CJK JP',sans-serif;font-size:21.33px;font-weight:200;will-change:transform;color:#5c5c5c;left:852.75px;top:589px;">表題</span>
<div style="left:800px;top:625px;width:13px;height:13px;background:#fff;border:1px solid #adadad;"></div>
<span class="t" style="font-family:'Liberation Sans','Noto Sans CJK JP',sans-serif;font-size:13px;font-weight:500;transform:scaleX(0.7526);color:#444;left:817.00px;top:626px;">プレビューを表示する</span>
<div style="left:800px;top:648px;width:13px;height:13px;background:#fff;border:1px solid #adadad;"></div>
<span class="t" style="font-family:'Liberation Sans','Noto Sans CJK JP',sans-serif;font-size:13px;font-weight:500;transform:scaleX(0.7528);color:#444;left:816.16px;top:649px;">リンクされたスタイルを使用不可にする</span>
<div style="left:800px;top:670px;width:24px;height:24px;background:#fff;border:1px solid #adadad;"></div>
<div style="left:833px;top:670px;width:24px;height:24px;background:#fff;border:1px solid #adadad;"></div>
<div style="left:866px;top:670px;width:24px;height:24px;background:#fff;border:1px solid #adadad;"></div>
<div style="left:899px;top:670px;width:73px;height:25px;background:#fff;border:1px solid #adadad;"></div>
<span class="t" style="font-family:'Liberation Sans','Noto Sans CJK JP',sans-serif;font-size:13px;font-weight:500;transform:scaleX(0.7429);color:#444;left:907.08px;top:676px;">オプション...</span>
<svg style="left:0px;top:0px;" width="1023" height="715" viewBox="0 0 1023 715"><path d="M946.4 71.8H956.4L951.4 77Z" fill="#707070"/><path d="M988.8 70.1L997.4 78.7M997.4 70.1L988.8 78.7" stroke="#6e6e6e" stroke-width="2.1" fill="none"/><rect x="959" y="149" width="1" height="7" fill="#000080"/><rect x="952" y="155" width="7" height="1" fill="#000080"/><rect x="952" y="154" width="1" height="3" fill="#000080"/><rect x="953" y="153" width="1" height="5" fill="#000080"/><rect x="951" y="155" width="1" height="1" fill="#000080"/><rect x="959" y="186" width="1" height="7" fill="#000080"/><rect x="952" y="192" width="7" height="1" fill="#000080"/><rect x="952" y="191" width="1" height="3" fill="#000080"/><rect x="953" y="190" width="1" height="5" fill="#000080"/><rect x="951" y="192" width="1" height="1" fill="#000080"/><rect x="954" y="259" width="1" height="5" fill="#000080"/><rect x="950" y="263" width="4" height="1" fill="#000080"/><rect x="950" y="262" width="1" height="3" fill="#000080"/><rect x="949" y="263" width="1" height="1" fill="#000080"/><rect x="951" y="261" width="1" height="5" fill="#000080"/><rect x="949" y="267" width="12" height="2" fill="#000080"/><rect x="954" y="296" width="1" height="5" fill="#000080"/><rect x="950" y="300" width="4" height="1" fill="#000080"/><rect x="950" y="299" width="1" height="3" fill="#000080"/><rect x="949" y="300" width="1" height="1" fill="#000080"/><rect x="951" y="298" width="1" height="5" fill="#000080"/><rect x="949" y="304" width="12" height="2" fill="#000080"/><rect x="954" y="333" width="1" height="5" fill="#000080"/><rect x="950" y="337" width="4" height="1" fill="#000080"/><rect x="950" y="336" width="1" height="3" fill="#000080"/><rect x="949" y="337" width="1" height="1" fill="#000080"/><rect x="951" y="335" width="1" height="5" fill="#000080"/><rect x="949" y="341" width="12" height="2" fill="#000080"/><rect x="954" y="370" width="1" height="5" fill="#000080"/><rect x="950" y="374" width="4" height="1" fill="#000080"/><rect x="950" y="373" width="1" height="3" fill="#000080"/><rect x="949" y="374" width="1" height="1" fill="#000080"/><rect x="951" y="372" width="1" height="5" fill="#000080"/><rect x="949" y="378" width="12" height="2" fill="#000080"/><rect x="954" y="407" width="1" height="5" fill="#000080"/><rect x="950" y="411" width="4" height="1" fill="#000080"/><rect x="950" y="410" width="1" height="3" fill="#000080"/><rect x="949" y="411" width="1" height="1" fill="#000080"/><rect x="951" y="409" width="1" height="5" fill="#000080"/><rect x="949" y="415" width="12" height="2" fill="#000080"/><rect x="954" y="444" width="1" height="5" fill="#000080"/><rect x="950" y="448" width="4" height="1" fill="#000080"/><rect x="950" y="447" width="1" height="3" fill="#000080"/><rect x="949" y="448" width="1" height="1" fill="#000080"/><rect x="951" y="446" width="1" height="5" fill="#000080"/><rect x="949" y="452" width="12" height="2" fill="#000080"/><rect x="954" y="481" width="1" height="5" fill="#000080"/><rect x="950" y="485" width="4" height="1" fill="#000080"/><rect x="950" y="484" width="1" height="3" fill="#000080"/><rect x="949" y="485" width="1" height="1" fill="#000080"/><rect x="951" y="483" width="1" height="5" fill="#000080"/><rect x="949" y="489" width="12" height="2" fill="#000080"/><rect x="954" y="518" width="1" height="5" fill="#000080"/><rect x="950" y="522" width="4" height="1" fill="#000080"/><rect x="950" y="521" width="1" height="3" fill="#000080"/><rect x="949" y="522" width="1" height="1" fill="#000080"/><rect x="951" y="520" width="1" height="5" fill="#000080"/><rect x="949" y="526" width="12" height="2" fill="#000080"/><rect x="954" y="555" width="1" height="5" fill="#000080"/><rect x="950" y="559" width="4" height="1" fill="#000080"/><rect x="950" y="558" width="1" height="3" fill="#000080"/><rect x="949" y="559" width="1" height="1" fill="#000080"/><rect x="951" y="557" width="1" height="5" fill="#000080"/><rect x="949" y="563" width="12" height="2" fill="#000080"/><rect x="954" y="592" width="1" height="5" fill="#000080"/><rect x="950" y="596" width="4" height="1" fill="#000080"/><rect x="950" y="595" width="1" height="3" fill="#000080"/><rect x="949" y="596" width="1" height="1" fill="#000080"/><rect x="951" y="594" width="1" height="5" fill="#000080"/><rect x="949" y="600" width="12" height="2" fill="#000080"/><path d="M803.2 631.2L805.9 634L810.4 628.2" stroke="#8a8a8a" stroke-width="1.3" fill="none"/><path d="M817.2 683.4V690M813.9 686.7H820.5" stroke="#13a10e" stroke-width="1.1" fill="none"/><circle cx="846.6" cy="683.6" r="3.1" fill="#fff" stroke="#1e8bd4" stroke-width="1.1"/><path d="M848.9 685.9L852.8 689.8" stroke="#1e8bd4" stroke-width="1.2" fill="none"/><path d="M873.6 687.2L876.8 690.4L885.2 682.6" stroke="#13a10e" stroke-width="1.1" fill="none"/></svg>
<span class="t" style="font-family:'Liberation Sans',sans-serif;font-size:14px;font-weight:700;will-change:transform;transform:scaleX(0.9772);color:#000080;left:953.32px;top:219px;">a</span>
<span class="t" style="font-family:'Liberation Sans',sans-serif;font-size:13px;font-weight:700;will-change:transform;transform:scaleX(0.7689);color:#000080;left:955.34px;top:255px;">a</span>
<span class="t" style="font-family:'Liberation Sans',sans-serif;font-size:13px;font-weight:700;will-change:transform;transform:scaleX(0.7689);color:#000080;left:955.34px;top:292px;">a</span>
<span class="t" style="font-family:'Liberation Sans',sans-serif;font-size:13px;font-weight:700;will-change:transform;transform:scaleX(0.7689);color:#000080;left:955.34px;top:329px;">a</span>
<span class="t" style="font-family:'Liberation Sans',sans-serif;font-size:13px;font-weight:700;will-change:transform;transform:scaleX(0.7689);color:#000080;left:955.34px;top:366px;">a</span>
<span class="t" style="font-family:'Liberation Sans',sans-serif;font-size:13px;font-weight:700;will-change:transform;transform:scaleX(0.7689);color:#000080;left:955.34px;top:403px;">a</span>
<span class="t" style="font-family:'Liberation Sans',sans-serif;font-size:13px;font-weight:700;will-change:transform;transform:scaleX(0.7689);color:#000080;left:955.34px;top:440px;">a</span>
<span class="t" style="font-family:'Liberation Sans',sans-serif;font-size:13px;font-weight:700;will-change:transform;transform:scaleX(0.7689);color:#000080;left:955.34px;top:477px;">a</span>
<span class="t" style="font-family:'Liberation Sans',sans-serif;font-size:13px;font-weight:700;will-change:transform;transform:scaleX(0.7689);color:#000080;left:955.34px;top:514px;">a</span>
<span class="t" style="font-family:'Liberation Sans',sans-serif;font-size:13px;font-weight:700;will-change:transform;transform:scaleX(0.7689);color:#000080;left:955.34px;top:551px;">a</span>
<span class="t" style="font-family:'Liberation Sans',sans-serif;font-size:13px;font-weight:700;will-change:transform;transform:scaleX(0.7689);color:#000080;left:955.34px;top:588px;">a</span>
<span class="t" style="font-family:'Liberation Sans',sans-serif;font-size:17px;will-change:transform;transform:scaleX(1.2342);color:#505050;left:804.31px;top:672px;">A</span>
<span class="t" style="font-family:'Liberation Sans',sans-serif;font-size:17px;will-change:transform;transform:scaleX(0.8290);color:#505050;left:837.26px;top:672px;">A</span>
<span class="t" style="font-family:'Liberation Sans',sans-serif;font-size:17px;will-change:transform;transform:scaleX(0.9119);color:#505050;left:870.06px;top:672px;">A</span>
</aside>
</div>
</body>
</html>
